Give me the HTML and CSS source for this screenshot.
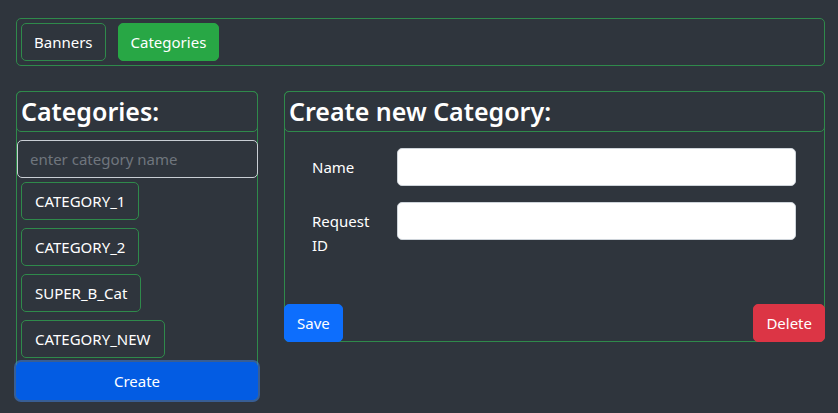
FILE: index.html
```html
<!DOCTYPE html>
<html>
<head>
<meta charset="utf-8">
<link rel="stylesheet" href="styles.css">
</head>
<body>
  <nav class="topnav">
    <button class="btn btn-outline">Banners</button>
    <button class="btn btn-green">Categories</button>
  </nav>
  <main class="layout">
    <section class="panel panel-left">
      <h3 class="panel-head">Categories:</h3>
      <input class="search" type="text" placeholder="enter category name">
      <div class="cat-list">
        <button class="btn btn-outline cat">CATEGORY_1</button>
        <button class="btn btn-outline cat">CATEGORY_2</button>
        <button class="btn btn-outline cat">SUPER_B_Cat</button>
        <button class="btn btn-outline cat">CATEGORY_NEW</button>
      </div>
      <button class="btn btn-create">Create</button>
    </section>
    <section class="panel panel-right">
      <h3 class="panel-head">Create new Category:</h3>
      <form class="form">
        <div class="form-row">
          <label class="form-label">Name</label>
          <input class="form-input" type="text">
        </div>
        <div class="form-row">
          <label class="form-label">Request ID</label>
          <input class="form-input" type="text">
        </div>
      </form>
      <div class="actions">
        <button class="btn btn-save">Save</button>
        <button class="btn btn-delete">Delete</button>
      </div>
    </section>
  </main>
</body>
</html>
```
FILE: styles.css
```css
* { box-sizing: border-box; }
html, body { height: 100%; }
body {
  margin: 0;
  padding: 18px 13px 0 16px;
  background: #2f353d;
  color: #fff;
  font-family: "Noto Sans", "Open Sans", sans-serif;
  font-size: 15px;
  line-height: 24px;
}
.btn {
  font-family: inherit;
  font-size: 15px;
  line-height: 24px;
  padding: 6px 12px;
  border: 1px solid transparent;
  border-radius: 5px;
  color: #fff;
  background: transparent;
  cursor: pointer;
  text-align: center;
}
.btn-outline { border-color: #2f8a4b; }
.btn-green { background: #28a745; border-color: #28a745; }

.topnav {
  display: flex;
  gap: 12px;
  padding: 4px;
  border: 1px solid #2f8a4b;
  border-radius: 5px;
}

.layout {
  display: flex;
  align-items: flex-start;
  gap: 26px;
  margin-top: 25px;
}

.panel {
  border: 1px solid #2f8a4b;
  border-radius: 5px;
  display: flex;
  flex-direction: column;
}
.panel-left { width: 242px; }
.panel-right { flex: 1; }

.panel-head {
  margin: -1px -1px 0;
  height: 41px;
  padding: 4px 4px;
  border: 1px solid #2f8a4b;
  border-radius: 5px;
  font-size: 25px;
  font-weight: 600;
  line-height: 31px;
  white-space: nowrap;
}

.search {
  margin: 8px -1px 0 0;
  height: 38px;
  padding: 6px 12px;
  font-family: inherit;
  font-size: 15px;
  color: #fff;
  background: transparent;
  border: 1px solid #c9ced4;
  border-radius: 5px;
  outline: none;
}
.search::placeholder { color: #6f767e; }

.cat-list {
  display: flex;
  flex-direction: column;
  align-items: flex-start;
  gap: 8px;
  padding: 4px 4px 0;
}
.cat { height: 38px; padding: 6px 13px; }

.btn-create {
  margin: 4px 0 -1px -1px;
  height: 38px;
  width: 242px;
  background: #035ce3;
  border-color: #035ce3;
  box-shadow: 0 0 0 2px rgba(64, 128, 220, 0.55);
}

.form {
  padding: 16px 28px 0 27px;
  display: flex;
  flex-direction: column;
  gap: 16px;
}
.form-row {
  display: flex;
  align-items: flex-start;
  gap: 12px;
}
.form-label {
  width: 73px;
  padding-top: 7px;
  padding-bottom: 7px;
  line-height: 24px;
}
.form-input {
  flex: 1;
  height: 38px;
  border: 1px solid #ced4da;
  border-radius: 5px;
  background: #fff;
  outline: none;
}

.actions {
  display: flex;
  justify-content: space-between;
  margin: 40px -1px -1px;
}
.btn-save { background: #0d6efd; border-color: #0d6efd; height: 38px; }
.btn-delete { background: #dc3545; border-color: #dc3545; height: 38px; }
```
